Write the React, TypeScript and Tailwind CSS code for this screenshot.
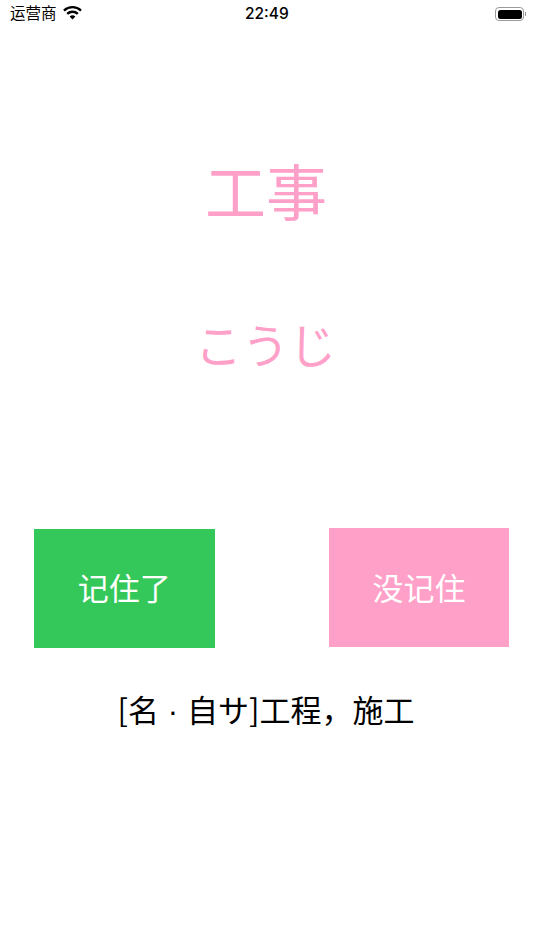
import React from "react";

const cjk = { fontFamily: '"Noto Sans CJK SC", "Noto Sans CJK JP", sans-serif' };
const ja = { fontFamily: '"Noto Sans CJK JP", sans-serif' };

const StatusBar = () => (
  <div className="relative h-7 flex items-center justify-between pl-[10px] pr-[8px]">
    <div className="flex items-center gap-[6px]">
      <span className="text-[15.5px] leading-none text-black mt-[-3px]" style={cjk}>运营商</span>
      <svg width="19" height="14" viewBox="0 0 20 15" className="mt-[-3px]">
        <path d="M10 14.5 6.9 11.2a4.6 4.6 0 0 1 6.2 0Z" fill="#000" />
        <path d="M5.2 9.4 3.4 7.5a9.6 9.6 0 0 1 13.2 0l-1.8 1.9a7 7 0 0 0-9.6 0Z" fill="#000" />
        <path d="M1.7 5.8 0 4a14.6 14.6 0 0 1 20 0l-1.7 1.8a12.1 12.1 0 0 0-16.6 0Z" fill="#000" />
      </svg>
    </div>
    <span
      className="absolute left-[245px] top-[5px] text-[15.5px] leading-[18px] font-medium text-black"
      style={{ fontFamily: '"Inter", sans-serif' }}
    >
      22:49
    </span>
    <div className="flex items-center gap-[1px]">
      <div className="w-[29px] h-[14px] rounded-[4px] border border-[#9a9a9a] p-[1.5px]">
        <div className="w-full h-full rounded-[2.5px] bg-black" />
      </div>
      <div className="w-[1px] h-[4px] bg-[#9a9a9a]" />
    </div>
  </div>
);

export default function App() {
  return (
    <div className="w-[534px] h-[950px] bg-white overflow-hidden" style={cjk}>
      <StatusBar />
      <div className="flex flex-col items-center">
        <p lang="ja" className="mt-[117px] pr-[2px] text-[61px] leading-[89px] text-[#ffa0c8]" style={ja}>工事</p>
        <p lang="ja" className="mt-[76px] pr-[3px] text-[47px] leading-[66px] text-[#ffa0c8]" style={ja}>こうじ</p>
      </div>
      <div className="mt-[152px] flex items-start justify-between pl-[34px] pr-[25px]">
        <button className="mt-[1px] w-[180.5px] h-[119px] bg-[#34c85a] text-white text-[31px] pb-[2px]">记住了</button>
        <button className="w-[180px] h-[119px] bg-[#ffa0c8] text-white text-[31px]">没记住</button>
      </div>
      <p className="mt-[38px] pr-[2px] text-center text-[31px] leading-[46px] text-black">
        [名 <span className="px-[2px]" style={{ fontFamily: '"Liberation Sans", sans-serif' }}>·</span> 自サ]工程，施工
      </p>
    </div>
  );
}
